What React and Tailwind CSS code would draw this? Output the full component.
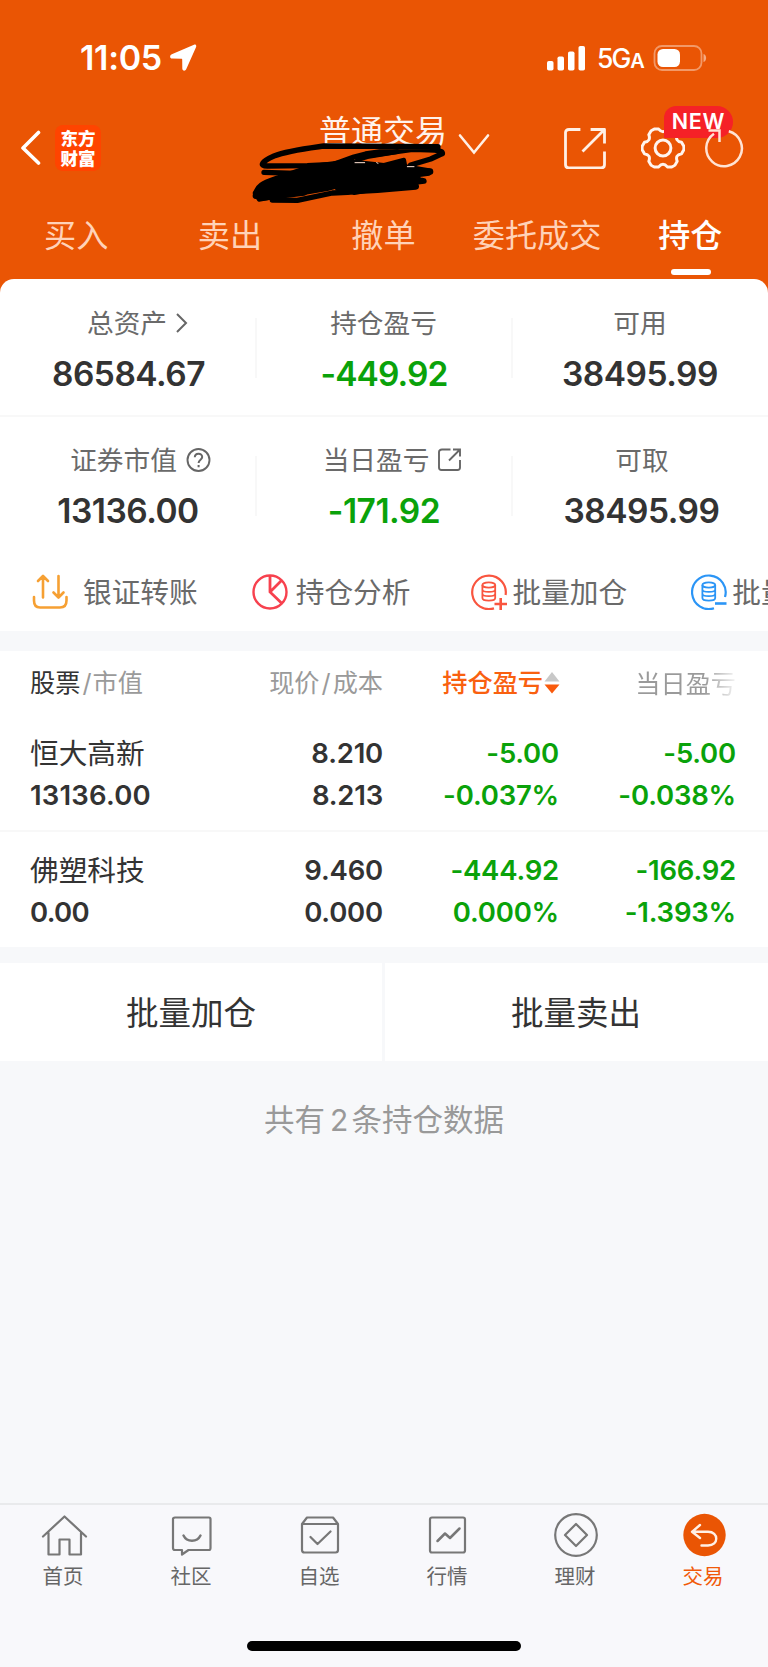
import React from "react";

const toRad = (deg) => (deg * Math.PI) / 180;
const polar = (r, deg) =>
  `${(22 + r * Math.cos(toRad(deg))).toFixed(2)} ${(22 + r * Math.sin(toRad(deg))).toFixed(2)}`;

const gearPath =
  [0, 60, 120, 180, 240, 300]
    .map((a, i) => {
      const start = `${i === 0 ? "M" : "L"}${polar(19.4, a - 17)}`;
      return `${start} L${polar(20.900, a - 5)} Q${polar(21, a)} ${polar(20.900, a + 5)} L${polar(19.4, a + 17)} Q${polar(13.6, a + 30)} ${polar(19.4, a + 43)}`;
    })
    .join(" ") + "Z";

function StatusBar() {
  return (
    <div className="flex h-[39px] items-center text-white">
      <span className="ml-[80px] w-[90px] text-[34px] leading-none font-semibold tracking-[-0.3px]">11:05</span>
      <svg className="h-[27px] w-[27px]" viewBox="0 0 27 27" fill="white">
        <path d="M24 .7 1.800 10.300C-.6 11.400-.4 14.500 2.200 14.600l9.200.2c.6 0 .8.2.8.8l.1 9c.1 2.600 3 2.900 4 .5L26 3.300C26.800 1.400 25.700 0 24 .7Z" />
      </svg>
      <svg className="ml-[350px] h-[26px] w-[39px]" viewBox="0 0 39 26" fill="white">
        <rect x="0" y="16" width="6.500" height="9.500" rx="1.800" />
        <rect x="10.500" y="11.500" width="6.500" height="14" rx="1.800" />
        <rect x="21" y="6.500" width="6.500" height="19" rx="1.800" />
        <rect x="31.500" y="1" width="6.500" height="24.500" rx="1.800" />
      </svg>
      <div className="mt-[2px] ml-[11px] flex w-[47px] items-baseline leading-none font-medium whitespace-nowrap">
        <span className="text-[26.500px] tracking-[-2px]">5G</span>
        <span className="ml-px text-[20px] font-semibold tracking-[-1px]">A</span>
      </div>
      <svg className="ml-[9px] h-[26px] w-[54px]" viewBox="0 0 54 26">
        <rect x="1.500" y="1" width="47" height="24" rx="7.500" fill="none" stroke="white" strokeOpacity=".4" strokeWidth="1.800" />
        <rect x="4.500" y="4" width="22.500" height="18" rx="5.500" fill="white" />
        <path d="M50.500 9c3.500 1 3.500 7 0 8Z" fill="white" fillOpacity=".5" />
      </svg>
    </div>
  );
}

function Scribble() {
  return (
    <svg className="absolute top-[105px] left-[244px] h-[110px] w-[210px]" viewBox="0 0 630 330" fill="none" stroke="black" strokeLinecap="round" strokeLinejoin="round">
      <path strokeWidth="16" d="M582 125 240 123C190 130 130 137 90 153C52 170 45 183 70 183L190 182 270 178 330 156 365 147 460 133 582 132M595 146 560 162 500 180M595 146C600 136 560 132 500 134L370 152M60 202 180 206M85 285 160 286 265 264 310 262 370 250M540 228 480 236 330 262" />
      <path strokeWidth="20" d="M36 272C40 240 60 236 110 218L200 188 320 172M50 278 180 262M558 200 480 206M515 244 400 254 290 260" />
      <path fill="black" strokeWidth="12" d="M190 192 330 170 420 180 480 164 484 184 555 196 555 206 510 212 530 224 400 234 280 244 250 252 180 264 110 272 45 284 32 264 50 244 110 216Z" />
      <path strokeWidth="14" d="M340 164 370 155 460 140" />
      <path strokeWidth="15" d="M280 250 400 240 535 226" />
      <path stroke="#ffe2d2" strokeWidth="3" d="M333 173H362M398 173l4 2M490 185H510" />
    </svg>
  );
}

function NavBar() {
  return (
    <div className="mt-[40px] flex h-[62px] items-center">
      <svg className="ml-[20px] h-[36px] w-[22px]" viewBox="0 0 22 36" fill="none" stroke="white" strokeWidth="3.600" strokeLinecap="round" strokeLinejoin="round">
        <path d="M18.500 2.500 3 18 18.500 33" />
      </svg>
      <div className="ml-[13px] h-[46px] w-[46px] rounded-[8px] bg-[#ff4400] pt-[3px] text-center font-['Noto_Sans_CJK_SC',sans-serif] text-[17.500px] leading-[19.500px] font-black text-white">
        东方<br />财富
      </div>
      <span className="-mt-[33px] ml-[218px] text-[32px] leading-none whitespace-nowrap text-[#fff3ec]">普通交易</span>
      <svg className="-mt-[8px] ml-[11px] h-[22px] w-[32px]" viewBox="0 0 32 22" fill="none" stroke="#fff0e6" strokeWidth="2.600" strokeLinecap="round">
        <path d="M2 2.500 16 19.500 30 2.500" />
      </svg>
      <svg className="ml-[74px] h-[42px] w-[42px]" viewBox="0 0 42 42" fill="none" stroke="#fff0e6" strokeWidth="2.800" strokeLinecap="square" strokeLinejoin="round">
        <path d="M15 2.500H5Q1.500 2.500 1.500 5.500V37.500Q1.500 41 5 41H37Q40.500 41 40.500 37.500V26M28 2.500H40.500V15M39 4 19.500 23.500" />
      </svg>
      <svg className="ml-[35px] h-[44px] w-[44px]" viewBox="0 0 44 44" fill="none" stroke="#fff4ee" strokeWidth="3" strokeLinejoin="round">
        <path d={gearPath} />
        <circle cx="22" cy="22" r="7.900" />
      </svg>
      <div className="relative ml-[20px] h-[44px] w-[40px]">
        <div className="absolute -top-[20px] -left-[41px] flex h-[32px] w-[69px] items-center justify-center rounded-[16px] rounded-tl-[12px] rounded-bl-[1px] bg-[#f52127] text-[21.500px] leading-none font-semibold tracking-[0.8px] text-white">
          NEW
        </div>
        <svg className="absolute top-0 left-0 h-[44px] w-[40px]" viewBox="0 0 40 44" fill="none" stroke="#ffe3d4" strokeWidth="2.500">
          <path d="M23.800 5.200A17.800 17.800 0 1 1 9 7.700M3.500 4.600H14.500V16" />
        </svg>
      </div>
    </div>
  );
}

const tabs = ["买入", "卖出", "撤单", "委托成交", "持仓"];

function Tabs() {
  return (
    <div className="grid h-[100px] grid-cols-5 pt-[40px] text-center">
      {tabs.map((t) => (
        <div key={t} className={t === "持仓" ? "flex flex-col items-center text-[32px] leading-[34px] font-medium text-white" : "pr-px text-[32.200px] leading-[34px] whitespace-nowrap text-[#ffd2b8]"}>
          <span className={t === "持仓" ? "pr-[2px]" : ""}>{t}</span>
          {t === "持仓" && <div className="mt-[16px] h-[6px] w-[40px] rounded-full bg-white" />}
        </div>
      ))}
    </div>
  );
}

const ChevronRight = (
  <svg className="ml-[9px] h-[20px] w-[12px]" viewBox="0 0 12 20" fill="none" stroke="#666" strokeWidth="2">
    <path d="M1 1 10 10 1 19" />
  </svg>
);
const Help = (
  <svg className="ml-[9px] h-[25px] w-[25px]" viewBox="0 0 25 25" fill="none" stroke="#666" strokeWidth="1.900">
    <circle cx="12.500" cy="12" r="11" />
    <path strokeWidth="2" d="M8.800 9.300C8.800 4.500 16.200 4.500 16.200 9.100 16.200 11.800 12.600 11.600 12.600 14.900M12.600 17.100V19.300" />
  </svg>
);
const Share = (
  <svg className="ml-[9px] h-[24px] w-[24px]" viewBox="0 0 24 24" fill="none" stroke="#666" strokeWidth="1.900">
    <path d="M12.500 1.500H4Q1 1.500 1 4V19.500Q1 22 3.500 22H19.500Q22 22 22 19.500V12M15 1.500H22V8.500M21.500 2 11 12.500" />
  </svg>
);

const summary = [
  [
    { label: "总资产", icon: ChevronRight, value: "86584.67", pad: "pl-[19px]", valuePad: "pl-px" },
    { label: "持仓盈亏", value: "-449.92", down: true, pad: "pr-px", tight: true },
    { label: "可用", value: "38495.99", pad: "pr-0" },
  ],
  [
    { label: "证券市值", icon: Help, value: "13136.00", pad: "pl-[25px]", valuePad: "pr-0" },
    { label: "当日盈亏", icon: Share, value: "-171.92", down: true, pad: "pl-[17px]" },
    { label: "可取", value: "38495.99", pad: "pl-[4px]", valuePad: "pl-[3px]" },
  ],
];

function Summary() {
  return (
    <div>
      {summary.map((row, r) => (
        <div key={r} className={r === 0 ? "grid h-[138px] grid-cols-3 border-b-2 border-[#f8f8f8]" : "grid h-[136px] grid-cols-3"}>
          {row.map((c, i) => (
            <div key={c.label} className={r === 0 ? "relative flex flex-col items-center pt-[30px]" : "relative flex flex-col items-center pt-[29px]"}>
              <div className={`flex h-[28px] items-center text-[26.700px] leading-none whitespace-nowrap text-[#6a6a6a] ${c.pad || ""}`}>
                {c.label}
                {c.icon}
              </div>
              <div className={`mt-[20px] text-[33.500px] leading-[34px] font-semibold ${c.tight ? "tracking-[-0.9px]" : "tracking-[-0.5px]"} ${c.valuePad || ""} ${c.down ? "text-[#0aa20a]" : "text-[#333]"}`}>{c.value}</div>
              {i < 2 && <div className="absolute top-[39px] -right-px h-[60px] w-[2px] bg-[#f8f8f8]" />}
            </div>
          ))}
        </div>
      ))}
    </div>
  );
}

function Coins({ color, minus }) {
  return (
    <svg className="h-[36px] w-[36px] shrink-0" viewBox="0 0 36 36" fill="none" stroke={color} strokeWidth="2.200">
      <path d={minus ? "M34 23A16.800 16.800 0 1 0 23 34.300" : "M34.600 21A16.800 16.800 0 1 0 23 34.400"} />
      <ellipse cx="17.800" cy="11" rx="6.400" ry="2.600" strokeWidth="1.800" />
      <path strokeWidth="1.800" d="M11.400 11V24C11.400 27.500 24.200 27.500 24.200 24V11M11.400 15.500C11.400 18.700 24.200 18.700 24.200 15.500M11.400 19.800C11.400 23 24.200 23 24.200 19.800" />
      <path strokeWidth="2.600" d={minus ? "M24 29.500H35.500" : "M23.500 30H36M29.700 24V36"} />
    </svg>
  );
}

function Toolbar() {
  return (
    <div className="flex h-[78px] items-center overflow-hidden text-[28.700px] leading-[34px] whitespace-nowrap text-[#6a6a6a]">
      <svg className="ml-[31px] h-[36px] w-[37px] shrink-0" viewBox="0 0 37 36" fill="none" stroke="#f6a033" strokeWidth="2.600" strokeLinecap="round" strokeLinejoin="round">
        <path d="M3 23V26.500Q3 33.500 9 33.500H29Q35.500 33.500 35.500 26.500V23M12 23.500V3M7 7 12 2 17 7M27.500 2V23M22.500 18.500 27.500 23.500 32.500 18.500" />
      </svg>
      <span className="mt-px ml-[15px]">银证转账</span>
      <svg className="ml-[54px] h-[36px] w-[36px] shrink-0" viewBox="0 0 36 36" fill="none" stroke="#f7414e" strokeWidth="2.400">
        <circle cx="18" cy="18" r="16.500" />
        <path strokeWidth="2.800" d="M18 1.500V18L30 29.500M18 18 29.500 6.500" />
      </svg>
      <span className="mt-px ml-[8px]">持仓分析</span>
      <div className="ml-[60px] flex shrink-0 items-center">
        <Coins color="#f9553f" />
        <span className="mt-px ml-[6px]">批量加仓</span>
      </div>
      <div className="ml-[64px] flex shrink-0 items-center">
        <Coins color="#2b95f6" minus />
        <span className="mt-px ml-[5px]">批量卖出</span>
      </div>
    </div>
  );
}

const holdings = [
  { name: "恒大高新", rows: [["8.210", "-5.00", "-5.00"], ["8.213", "-0.037%", "-0.038%"]], total: "13136.00" },
  { name: "佛塑科技", rows: [["9.460", "-444.92", "-166.92"], ["0.000", "0.000%", "-1.393%"]], total: "0.00" },
];

function Holdings() {
  return (
    <div className="bg-white">
      <div className="grid h-[64px] grid-cols-[170px_183px_177px_176px] items-center pt-px pl-[30px] text-[25.200px] leading-none whitespace-nowrap text-[#9a9a9a]">
        <div><span className="text-[#333]">股票</span><span className="pr-px pl-[2px]">/</span>市值</div>
        <div className="text-right">现价<span className="px-[2px]">/</span>成本</div>
        <div className="flex items-center justify-end font-medium text-[#f9600f]">
          持仓盈亏
          <svg className="ml-px h-[22px] w-[16px]" viewBox="0 0 16 22"><path d="M8 0 15.500 9.500H.5Z" fill="#c8c8c8" /><path d="M8 21.500.5 12.500H15.500Z" fill="#f95a0c" /></svg>
        </div>
        <div className="bg-[linear-gradient(90deg,#9a9a9a_82%,#f4f4f4_100%)] bg-clip-text text-right leading-[34px] text-transparent">当日盈亏</div>
      </div>
      {holdings.map((h, i) => (
        <div key={h.name} className={i === 0 ? "h-[117px] border-b-2 border-[#f8f8f8] pt-[18px]" : "h-[115px] pt-[18px]"}>
          {h.rows.map((r, k) => (
            <div key={k} className="grid h-[42px] grid-cols-[170px_183px_176px_177px] items-center pl-[30px] text-right text-[27.500px] leading-none font-semibold tracking-[-0.2px] whitespace-nowrap text-[#0aa20a]">
              <div className={k === 0 ? "text-left text-[28.700px] font-normal tracking-normal text-[#333]" : i === 0 ? "text-left tracking-[0.2px] text-[#333]" : "text-left tracking-[-0.700px] text-[#333]"}>{k === 0 ? h.name : h.total}</div>
              <div className="text-[#333]">{r[0]}</div>
              <div>{r[1]}</div>
              <div>{r[2]}</div>
            </div>
          ))}
        </div>
      ))}
    </div>
  );
}

const navItems = [
  ["首页", <path d="M3 21.500 24.500 1.500 46 21.500M8.500 18V39.500H19.500V24.500H29.500V39.500H41V18" />],
  ["社区", <><path d="M7 2.500H41Q42.500 2.500 42.500 4V33Q42.500 35 41 35H20.500L14 39.500V35H7Q5 35 5 33V4Q5 2.500 7 2.500Z" /><path d="M15.500 20.500C19 27.500 29 27.500 32.500 20.500" strokeWidth="2.500" /></>],
  ["自选", <path d="M6 9 11 2.500H37L42 9V35Q42 37.500 39.500 37.500H8.500Q6 37.500 6 35ZM6 9H42M14.500 22 21.500 29 34.500 16.500" />],
  ["行情", <><rect x="6" y="2.500" width="35" height="35" rx="2" /><path d="M13.500 26 21 18.500 26 23 35.500 13.500" strokeWidth="2.500" /></>],
  ["理财", <><circle cx="24" cy="20" r="20.800" /><path d="M24 9 35 20 24 31 13 20Z" /></>],
];

function BottomNav() {
  return (
    <div className="grid h-[90px] grid-cols-6 border-t-2 border-[#e9eaec] pt-[8px] text-center text-[20.500px] leading-[22px] text-[#666]">
      {navItems.map(([label, icon]) => (
        <div key={label} className="flex flex-col items-center pr-px">
          <svg className="h-[46px] w-[47px] overflow-visible" viewBox="0 -2 47 46" fill="none" stroke="#777" strokeWidth="2.200" strokeLinejoin="round" strokeLinecap="round">{icon}</svg>
          <span className="mt-[7px] pr-px">{label}</span>
        </div>
      ))}
      <div className="flex flex-col items-center pr-[2px] text-[#f15a09]">
        <svg className="h-[46px] w-[47px] overflow-visible" viewBox="0 -2 47 46" fill="none" stroke="#fff0e6" strokeWidth="2.400" strokeLinecap="round" strokeLinejoin="round">
          <circle cx="24.500" cy="20" r="21.200" fill="#ea5504" stroke="none" />
          <path d="M20 10 12 16.800 20 23M12 16.800H28C39 16.800 39 30.500 28 30.500H21.500" />
        </svg>
        <span className="mt-[7px]">交易</span>
      </div>
    </div>
  );
}

export default function App() {
  return (
    <div className="relative flex h-[1667px] w-[768px] flex-col overflow-hidden bg-[#f7f8fa] font-[Inter,'Noto_Sans_CJK_SC',sans-serif]">
      <div className="bg-[#ea5504] pt-[38px]">
        <StatusBar />
        <NavBar />
        <Tabs />
        <div className="h-[352px] rounded-t-[14px] bg-white">
          <Summary />
          <Toolbar />
        </div>
      </div>
      <div className="mt-[20px]">
        <Holdings />
      </div>
      <div className="mt-[16px] grid h-[98px] grid-cols-[382px_383px] gap-[3px] text-center text-[32.500px] text-[#333]">
        <div className="bg-white pt-[4px] leading-[94px]">批量加仓</div>
        <div className="bg-white pt-[4px] pr-px leading-[94px]">批量卖出</div>
      </div>
      <div className="mt-[41px] text-center text-[30.500px] leading-[36px] text-[#999]">
        共有<span className="pr-[3px] pl-[5px] text-[30px]">2</span>条持仓数据
      </div>
      <div className="mt-auto h-[164px] bg-[#f8f8fb]">
        <BottomNav />
        <div className="mx-auto mt-[48px] h-[10px] w-[274px] rounded-full bg-black" />
      </div>
      <Scribble />
    </div>
  );
}
